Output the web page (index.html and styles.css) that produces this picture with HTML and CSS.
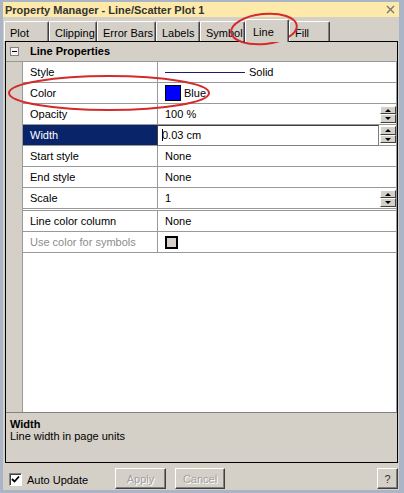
FILE: index.html
```
<!DOCTYPE html>
<html lang="en">
<head>
  <meta charset="UTF-8" />
  <title>Property Manager</title>
  <link rel="stylesheet" href="styles.css">
</head>
<body>
  <div class="window">
    <div class="titlebar">
      <span>Property Manager - Line/Scatter Plot 1</span>
      <svg class="close" width="9" height="9" viewBox="0 0 9 9"><path d="M1 1L8 8M8 1L1 8" stroke="#777" stroke-width="1.4"/></svg>
    </div>

    <div class="tabs">
      <div class="tab">Plot</div>
      <div class="tab">Clipping</div>
      <div class="tab">Error Bars</div>
      <div class="tab">Labels</div>
      <div class="tab">Symbol</div>
      <div class="tab active">Line</div>
      <div class="tab">Fill</div>
    </div>

    <div class="panel">
      <div class="grid">
        <div class="group">
          <div class="group-toggle"><span class="collapse"></span></div>
          <div class="group-title">Line Properties</div>
        </div>
        <div class="grid-body">
          <div class="gutter"></div>
          <div class="props">
            <div class="row">
              <div class="name">Style</div>
              <div class="value"><span class="line-sample"></span>Solid</div>
            </div>
            <div class="row">
              <div class="name">Color</div>
              <div class="value"><span class="swatch"></span>Blue</div>
            </div>
            <div class="row">
              <div class="name">Opacity</div>
              <div class="value"><span class="text">100 %</span><span class="spin"><b class="up"></b><b class="down"></b></span></div>
            </div>
            <div class="row">
              <div class="name selected">Width</div>
              <div class="value editing"><span class="edit"><span class="caret"></span>0.03 cm</span><span class="spin"><b class="up"></b><b class="down"></b></span></div>
            </div>
            <div class="row">
              <div class="name">Start style</div>
              <div class="value">None</div>
            </div>
            <div class="row">
              <div class="name">End style</div>
              <div class="value">None</div>
            </div>
            <div class="row split">
              <div class="name">Scale</div>
              <div class="value"><span class="text">1</span><span class="spin"><b class="up"></b><b class="down"></b></span></div>
            </div>
            <div class="row">
              <div class="name">Line color column</div>
              <div class="value">None</div>
            </div>
            <div class="row">
              <div class="name disabled">Use color for symbols</div>
              <div class="value"><span class="box"></span></div>
            </div>
          </div>
        </div>
      </div>
      <div class="desc">
        <div class="desc-title">Width</div>
        <div>Line width in page units</div>
      </div>
    </div>

    <div class="footer">
      <label class="auto">
        <span class="check"><svg width="9" height="9" viewBox="0 0 9 9"><path d="M1 4L3.5 6.5L8 1.5" fill="none" stroke="#000" stroke-width="1.8"/></svg></span>
        Auto Update
      </label>
      <button class="btn apply" disabled>Apply</button>
      <button class="btn cancel" disabled>Cancel</button>
      <span class="spacer"></span>
      <button class="btn help">?</button>
    </div>
  </div>

  <!-- red pen marks drawn over the dialog -->
  <svg class="marks" width="404" height="493" viewBox="0 0 404 493">
    <ellipse cx="264" cy="29" rx="33" ry="15" transform="rotate(-6 264 29)" fill="none" stroke="#d52a2a" stroke-width="2"/>
    <ellipse cx="109" cy="93" rx="100" ry="17" fill="none" stroke="#d52a2a" stroke-width="2"/>
  </svg>
</body>
</html>
```

FILE: styles.css
```
* {
  box-sizing: border-box;
}
body {
  margin: 0;
  width: 404px;
  height: 493px;
  overflow: hidden;
  position: relative;
  background: #aab5c8;
  font-family: "Liberation Sans", Arial, sans-serif;
  font-size: 11px;
  color: #000;
}
.window {
  margin: 2px 5px 0 3px;
  height: 488px;
  background: #d4d0c8;
  display: flex;
  flex-direction: column;
}
.titlebar {
  height: 15px;
  background: #fde9a9;
  display: flex;
  align-items: center;
  justify-content: space-between;
  padding: 0 4px 0 2px;
  font-weight: bold;
  color: #333;
}

/* tab strip */
.tabs {
  height: 24px;
  display: flex;
  align-items: flex-end;
  padding-left: 1px;
}
.tab {
  height: 20px;
  padding: 4px 0 0 5px;
  line-height: 14px;
  border: 1px solid #fff;
  border-right-color: #404040;
  border-bottom: none;
  border-radius: 2px 2px 0 0;
  box-shadow: inset -1px 0 #808080;
  white-space: nowrap;
}
.tab:nth-child(1) { width: 45px; }
.tab:nth-child(2) { width: 48px; }
.tab:nth-child(3) { width: 59px; }
.tab:nth-child(4) { width: 44px; }
.tab:nth-child(5) { width: 45px; }
.tab:nth-child(6) { width: 44px; }
.tab:nth-child(7) { width: 41px; }
.tab.active {
  height: 23px;
  margin-bottom: -1px;
  padding: 5px 0 0 7px;
  background: #d4d0c8;
  position: relative;
  z-index: 1;
}

/* property grid */
.panel {
  flex: 1;
  margin: 0 1px 0 2px;
  border: 1px solid #000;
  display: flex;
  flex-direction: column;
}
.grid {
  flex: 1;
  display: flex;
  flex-direction: column;
}
.group {
  height: 20px;
  display: flex;
  border-bottom: 1px solid #999;
}
.group-toggle {
  width: 17px;
  padding: 5px 0 0 4px;
}
.collapse {
  display: block;
  width: 9px;
  height: 9px;
  border: 1px solid #808080;
  background: #f4f4f4;
  position: relative;
}
.collapse::after {
  content: "";
  position: absolute;
  left: 1px;
  top: 3px;
  width: 5px;
  height: 1px;
  background: #000;
}
.group-title {
  padding-left: 7px;
  line-height: 19px;
  font-weight: bold;
}
.grid-body {
  flex: 1;
  display: flex;
}
.gutter {
  width: 17px;
  border-right: 1px solid #999;
}
.props {
  flex: 1;
  background: #fff;
  border-right: 1px solid #999;
}
.row {
  height: 21px;
  display: flex;
  border-bottom: 1px solid #999;
}
.row.split {
  height: 23px;
  border-bottom: 3px double #999;
}
.name {
  width: 135px;
  padding-left: 7px;
  line-height: 20px;
  border-right: 1px solid #999;
}
.name.selected {
  background: #0a246a;
  color: #fff;
}
.name.disabled {
  color: #8c8c8c;
}
.value {
  flex: 1;
  display: flex;
  align-items: center;
  padding-left: 7px;
}
.value .text {
  flex: 1;
}
.line-sample {
  width: 80px;
  height: 1px;
  background: #1c1c6b;
  margin-right: 4px;
}
.swatch {
  width: 16px;
  height: 16px;
  border: 1px solid #000;
  background: #0000ff;
  margin-right: 3px;
}
.box {
  width: 13px;
  height: 13px;
  border: 2px solid #000;
  background: #d4d0c8;
}
.value.editing {
  padding-left: 0;
  margin-left: -1px;
  gap: 1px;
  align-items: flex-start;
}
.edit {
  flex: 1;
  height: 21px;
  padding-left: 4px;
  line-height: 19px;
  border: 1px solid #808080;
  border-top-color: #404040;
  border-left-color: #404040;
  background: #fff;
}
.caret {
  display: inline-block;
  width: 1px;
  height: 12px;
  background: #000;
  margin-right: -1px;
  vertical-align: -2px;
}
.spin {
  width: 16px;
  height: 17px;
  display: flex;
  flex-direction: column;
}
.editing .spin {
  margin-top: 1px;
}
.spin b {
  flex: 1;
  position: relative;
  background: #d4d0c8;
  border: 1px solid #fff;
  border-right-color: #404040;
  border-bottom-color: #404040;
}
.spin b::after {
  content: "";
  position: absolute;
  left: 4px;
  top: 2px;
  border-left: 3px solid transparent;
  border-right: 3px solid transparent;
}
.spin .up::after {
  border-bottom: 3px solid #000;
}
.spin .down::after {
  border-top: 3px solid #000;
}

/* description pane */
.desc {
  height: 50px;
  border-top: 1px solid #808080;
  padding: 5px 0 0 4px;
  line-height: 12px;
}
.desc-title {
  font-weight: bold;
}

/* bottom bar */
.footer {
  height: 27px;
  display: flex;
  align-items: flex-start;
  padding: 5px 0 0 6px;
}
.auto {
  width: 106px;
  display: flex;
  align-items: center;
  gap: 5px;
  margin-top: 5px;
}
.check {
  width: 13px;
  height: 13px;
  background: #fff;
  border: 1px solid #808080;
  border-right-color: #fff;
  border-bottom-color: #fff;
  box-shadow: inset 1px 1px #404040;
  display: flex;
  align-items: center;
  justify-content: center;
}
.btn {
  height: 21px;
  padding: 0;
  background: #d4d0c8;
  border: 1px solid #fff;
  border-right-color: #404040;
  border-bottom-color: #404040;
  box-shadow: inset -1px -1px #808080;
  font: inherit;
  color: #a0a0a0;
  text-shadow: 1px 1px #fff;
}
.apply {
  width: 51px;
  margin-right: 9px;
}
.cancel {
  width: 50px;
}
.spacer {
  flex: 1;
}
.help {
  width: 21px;
  margin-right: 1px;
  color: #333;
  text-shadow: none;
}

.marks {
  position: absolute;
  left: 0;
  top: 0;
  pointer-events: none;
}
```
